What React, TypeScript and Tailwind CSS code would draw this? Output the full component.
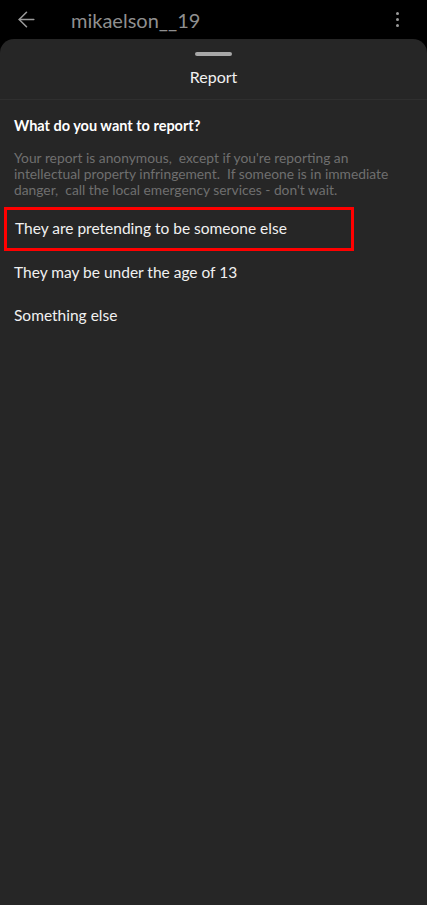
import { ArrowLeft } from 'lucide-react'

const options = ['They are pretending to be someone else', 'They may be under the age of 13', 'Something else']

export default function App() {
  return (
    <div className="flex h-[905px] w-[427px] flex-col overflow-hidden bg-black font-['Lato',sans-serif]">
      <header className="flex h-[39px] shrink-0 items-center px-[14px]">
        <ArrowLeft className="h-[25px] w-[25px] text-[#9a9a9a]" strokeWidth={1.5} />
        <span className="ml-[32px] text-[20px] text-[#8f8f8f]">mikaelson__19</span>
        <div className="ml-auto mr-[14px] flex flex-col gap-[3px]">
          <span className="h-[3px] w-[3px] rounded-full bg-[#9a9a9a]" />
          <span className="h-[3px] w-[3px] rounded-full bg-[#9a9a9a]" />
          <span className="h-[3px] w-[3px] rounded-full bg-[#9a9a9a]" />
        </div>
      </header>

      <section className="flex flex-1 flex-col rounded-t-[14px] bg-[#262626]">
        <div className="flex justify-center pt-[13px]">
          <span className="h-[4px] w-[37px] rounded-full bg-[#a8a8a8]" />
        </div>
        <h1 className="mt-[11px] text-center text-[16px] leading-[20px] text-[#f1f1f1]">Report</h1>
        <div className="mt-[12px] h-px bg-[#2f2f2f]" />

        <div className="px-[14px] pt-[16px]">
          <h2 className="text-[14.5px] font-bold leading-[20px] text-white">What do you want to report?</h2>
          <p className="mt-[14px] text-[13.8px] leading-[16px] text-[#6f6f6f]">
            Your report is anonymous,&nbsp; except if you're reporting an
            <br />
            intellectual property infringement.&nbsp; If someone is in immediate
            <br />
            danger,&nbsp; call the local emergency services - don't wait.
          </p>
        </div>

        <ul className="mt-[9px]">
          {options.map((o, i) => (
            <li
              key={o}
              className={
                i === 0
                  ? 'mx-[4px] mr-[73px] flex h-[44px] items-center border-[3px] border-[#ff0000] px-[8px] text-[15.5px] text-[#f1f1f1]'
                  : 'flex h-[43px] items-center px-[14px] text-[15.5px] text-[#f1f1f1]'
              }
            >
              {o}
            </li>
          ))}
        </ul>
      </section>
    </div>
  )
}
